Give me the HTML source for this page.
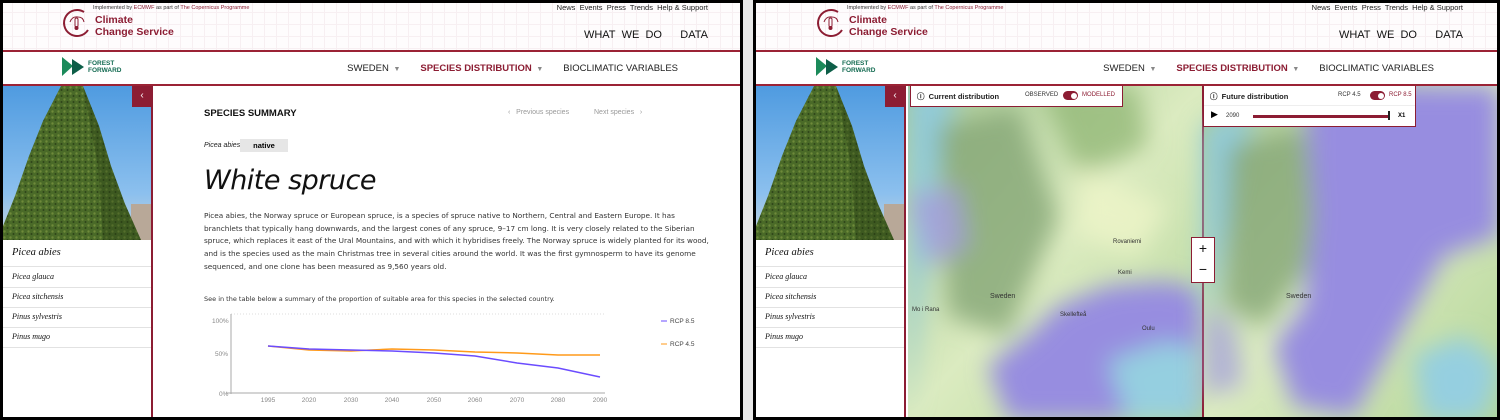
<!DOCTYPE html>
<html><head><meta charset="utf-8"><style>
*{margin:0;padding:0;box-sizing:border-box}
body{width:1500px;height:420px;background:#000;position:relative;overflow:hidden;font-family:"Liberation Sans",sans-serif}
.p{position:absolute;top:0;height:420px;overflow:hidden;background:#fff}
.a{position:absolute;white-space:nowrap}
.hdr{position:absolute;left:0;right:0;top:0;height:50px;background-color:#fefcfd;background-image:linear-gradient(#f7eff2 1px,transparent 1px),linear-gradient(90deg,#f7eff2 1px,transparent 1px);background-size:12px 12px}
.rl{position:absolute;left:0;right:0;height:2px;background:#9b2335}
.red{color:#8c1d33}
.nav{position:absolute;top:63px;font-size:9.5px;color:#222;display:flex;gap:0}
.side{position:absolute;left:3px;top:86px;width:150px;height:334px;background:#fff;border-right:2px solid #8c1d33}
.tree{position:absolute;left:0;top:0;width:148px;height:154px;background:linear-gradient(#4f9be0,#8cc0ee 70%,#c8d4dc)}
.it{position:absolute;left:0;width:148px;border-bottom:1.5px solid #e2e2e2;font-family:"Liberation Serif",serif;font-style:italic;font-size:8px;color:#111;padding-left:9px}
.btn{position:absolute;left:129px;top:0;width:20px;height:21px;background:#8c1d33;color:#fff;font-size:10px;text-align:center;line-height:20px}
.frame{position:absolute;background:#000}
</style></head><body>

<svg width="0" height="0" style="position:absolute"><defs>
<pattern id="tx" width="6" height="6" patternUnits="userSpaceOnUse"><rect width="6" height="6" fill="#4a6a28"/><circle cx="1.5" cy="1.5" r="1.2" fill="#6e8a3a"/><circle cx="4.5" cy="4" r="1" fill="#2e4418"/></pattern>
</defs></svg>

<!-- LEFT PANEL -->
<div class="p" style="left:0;width:741px">
 <div class="hdr"></div>
 <svg class="a" style="left:62px;top:8px" width="30" height="30" viewBox="0 0 30 30"><path d="M22 4 A13 13 0 1 0 26 22" fill="none" stroke="#8c1d33" stroke-width="2"/><path d="M8 14 q2-6 8-5 q5 0 6 5" fill="none" stroke="#8c1d33" stroke-width="1"/><rect x="13" y="10" width="3" height="9" rx="1.5" fill="none" stroke="#8c1d33"/><circle cx="14.5" cy="20" r="2" fill="#8c1d33"/></svg>
 <div class="a" style="left:93px;top:5px;font-size:5.5px;color:#333">Implemented by <span class="red">ECMWF</span> as part of <span class="red">The Copernicus Programme</span></div>
 <div class="a red" style="left:95px;top:14px;font-size:10.5px;font-weight:bold;line-height:12px">Climate<br>Change Service</div>
 <div class="a" style="right:33px;top:3px;font-size:7.5px;color:#222">News&nbsp; Events&nbsp; Press&nbsp; Trends&nbsp; Help &amp; Support</div>
 <div class="a" style="right:33px;top:29px;font-size:11px;color:#111">WHAT&nbsp; WE&nbsp; DO&nbsp;&nbsp;&nbsp;&nbsp;&nbsp; DATA</div>
 <div class="rl" style="top:50px"></div>
 <svg class="a" style="left:62px;top:57px" width="24" height="20"><polygon points="0,0 11,9 0,19" fill="#1b8a5a"/><polygon points="10,2 22,10 10,18" fill="#0d5e48"/></svg>
 <div class="a" style="left:88px;top:60px;font-size:6.5px;font-weight:bold;color:#146b52;line-height:7px">FOREST<br>FORWARD</div>
 <div class="nav" style="right:63px"><span>SWEDEN <span style="color:#888;font-size:7px">&nbsp;▼</span></span><span class="red" style="margin-left:20px;font-weight:bold">SPECIES DISTRIBUTION <span style="color:#888;font-size:7px">&nbsp;▼</span></span><span style="margin-left:20px">BIOCLIMATIC VARIABLES</span></div>
 <div class="rl" style="top:84px"></div>
 <div class="side">
  <div class="tree"><svg width="148" height="154"><rect x="128" y="118" width="20" height="36" fill="#b8a898"/><path d="M58 0 L80 0 L96 40 L108 80 L122 118 L138 154 L0 154 L0 140 L12 110 L26 70 L40 35 Z" fill="url(#tx)"/><path d="M80 0 L96 40 L108 80 L122 118 L138 154 L100 154 L95 80 Z" fill="#243812" opacity=".35"/></svg></div>
  <div class="btn">‹</div>
  <div class="it" style="top:156px;height:25px;font-size:10.5px;line-height:22px">Picea abies</div>
  <div class="it" style="top:182px;height:20px;line-height:18px">Picea glauca</div>
  <div class="it" style="top:202px;height:20px;line-height:18px">Picea sitchensis</div>
  <div class="it" style="top:222px;height:20px;line-height:18px">Pinus sylvestris</div>
  <div class="it" style="top:242px;height:20px;line-height:18px">Pinus mugo</div>
 </div>
 <div class="a" style="left:204px;top:108px;font-size:9.5px;font-weight:bold;color:#111">SPECIES SUMMARY</div>
 <div class="a" style="left:508px;top:109px;font-size:7px;color:#999">‹&nbsp;&nbsp; Previous species</div>
 <div class="a" style="left:594px;top:109px;font-size:7px;color:#999">Next species&nbsp;&nbsp; ›</div>
 <div class="a" style="left:204px;top:142px;font-size:7px;font-style:italic;color:#222">Picea abies</div>
 <div class="a" style="left:240px;top:139px;width:48px;height:13px;background:#e6e6e6;font-size:7.5px;font-weight:bold;text-align:center;line-height:13px">native</div>
 <div class="a" style="left:204px;top:165px;font-size:27px;font-style:italic;color:#111;font-family:'DejaVu Sans',sans-serif;letter-spacing:-0.5px">White spruce</div>
 <div class="a" style="left:204px;top:210px;width:505px;white-space:normal;font-size:7.3px;line-height:12.7px;color:#333;font-family:'DejaVu Sans',sans-serif">Picea abies, the Norway spruce or European spruce, is a species of spruce native to Northern, Central and Eastern Europe. It has branchlets that typically hang downwards, and the largest cones of any spruce, 9–17 cm long. It is very closely related to the Siberian spruce, which replaces it east of the Ural Mountains, and with which it hybridises freely. The Norway spruce is widely planted for its wood, and is the species used as the main Christmas tree in several cities around the world. It was the first gymnosperm to have its genome sequenced, and one clone has been measured as 9,560 years old.</div>
 <div class="a" style="left:204px;top:295px;font-size:6.5px;color:#333;font-family:'DejaVu Sans',sans-serif">See in the table below a summary of the proportion of suitable area for this species in the selected country.</div>
 <svg class="a" style="left:0;top:0" width="740" height="420" font-family="Liberation Sans" font-size="6.5" fill="#888">
  <line x1="231" y1="314" x2="605" y2="314" stroke="#ddd" stroke-dasharray="1,2"/>
  <line x1="231" y1="314" x2="231" y2="394" stroke="#aaa"/><line x1="226" y1="393" x2="605" y2="393" stroke="#aaa"/>
  <text x="212" y="323">100%</text><text x="215" y="356">50%</text><text x="219" y="396">0%</text>
  <g text-anchor="middle"><text x="268" y="402">1995</text><text x="309" y="402">2020</text><text x="351" y="402">2030</text><text x="392" y="402">2040</text><text x="434" y="402">2050</text><text x="475" y="402">2060</text><text x="517" y="402">2070</text><text x="558" y="402">2080</text><text x="600" y="402">2090</text></g>
  <polyline fill="none" stroke="#ff9a1a" stroke-width="1.5" points="268,346 309,350 351,351 392,349 434,350 475,352 517,353 558,355 600,355"/>
  <polyline fill="none" stroke="#6b4cff" stroke-width="1.5" points="268,346 309,349 351,350 392,351 434,353 475,356 517,363 558,368 600,377"/>
  <line x1="661" y1="321" x2="667" y2="321" stroke="#6b4cff"/><text x="670" y="323" fill="#444">RCP 8.5</text>
  <line x1="661" y1="344" x2="667" y2="344" stroke="#ff9a1a"/><text x="670" y="346" fill="#444">RCP 4.5</text>
 </svg>
</div>

<!-- RIGHT PANEL -->
<div class="p" style="left:753px;width:747px">
 <div class="hdr"></div>
 <svg class="a" style="left:63px;top:8px" width="30" height="30" viewBox="0 0 30 30"><path d="M22 4 A13 13 0 1 0 26 22" fill="none" stroke="#8c1d33" stroke-width="2"/><path d="M8 14 q2-6 8-5 q5 0 6 5" fill="none" stroke="#8c1d33" stroke-width="1"/><rect x="13" y="10" width="3" height="9" rx="1.5" fill="none" stroke="#8c1d33"/><circle cx="14.5" cy="20" r="2" fill="#8c1d33"/></svg>
 <div class="a" style="left:94px;top:5px;font-size:5.5px;color:#333">Implemented by <span class="red">ECMWF</span> as part of <span class="red">The Copernicus Programme</span></div>
 <div class="a red" style="left:96px;top:14px;font-size:10.5px;font-weight:bold;line-height:12px">Climate<br>Change Service</div>
 <div class="a" style="right:37px;top:3px;font-size:7.5px;color:#222">News&nbsp; Events&nbsp; Press&nbsp; Trends&nbsp; Help &amp; Support</div>
 <div class="a" style="right:37px;top:29px;font-size:11px;color:#111">WHAT&nbsp; WE&nbsp; DO&nbsp;&nbsp;&nbsp;&nbsp;&nbsp; DATA</div>
 <div class="rl" style="top:50px"></div>
 <svg class="a" style="left:63px;top:57px" width="24" height="20"><polygon points="0,0 11,9 0,19" fill="#1b8a5a"/><polygon points="10,2 22,10 10,18" fill="#0d5e48"/></svg>
 <div class="a" style="left:89px;top:60px;font-size:6.5px;font-weight:bold;color:#146b52;line-height:7px">FOREST<br>FORWARD</div>
 <div class="nav" style="right:66px"><span>SWEDEN <span style="color:#888;font-size:7px">&nbsp;▼</span></span><span class="red" style="margin-left:20px;font-weight:bold">SPECIES DISTRIBUTION <span style="color:#888;font-size:7px">&nbsp;▼</span></span><span style="margin-left:20px">BIOCLIMATIC VARIABLES</span></div>
 <div class="rl" style="top:84px"></div>
 <!-- maps -->
 <svg class="a" style="left:155px;top:86px" width="592" height="334">
  <defs>
   <filter id="b"><feGaussianBlur stdDeviation="12"/></filter>
   <linearGradient id="g" x1="0" y1="0" x2="1" y2="1"><stop offset="0" stop-color="#a6c894"/><stop offset=".5" stop-color="#dbebc0"/><stop offset="1" stop-color="#b3d598"/></linearGradient>
  </defs>
  <g>
   <rect width="294" height="334" fill="url(#g)"/>
   <g filter="url(#b)">
    <path d="M0 0 L50 0 L30 80 L15 200 L0 334 Z" fill="#92cbd9"/>
    <path d="M30 40 L110 20 L150 130 L100 250 L40 230 Z" fill="#86a676" opacity=".8"/>
    <path d="M130 0 L230 0 L240 60 L170 90 Z" fill="#8cb470" opacity=".7"/>
    <path d="M170 80 L260 120 L230 170 L170 150 Z" fill="#eef5c8" opacity=".8"/>
    <path d="M0 110 L50 100 L60 160 L20 180 Z" fill="#a39be0" opacity=".8"/>
    <path d="M150 220 L200 200 L260 195 L294 205 L294 334 L100 334 L80 280 L120 250 Z" fill="#978de0"/>
    <path d="M200 275 L260 255 L294 265 L290 334 L220 334 Z" fill="#95cfe0"/>
   </g>
  </g>
  <rect x="294" width="2" height="334" fill="#8c1d33"/>
  <g transform="translate(296,0)">
   <rect width="296" height="334" fill="url(#g)"/>
   <g filter="url(#b)">
    <path d="M0 40 L50 20 L25 120 L0 250 Z" fill="#92cbd9"/>
    <path d="M25 60 L100 40 L120 160 L60 240 L20 220 Z" fill="#86a676" opacity=".8"/>
    <path d="M100 0 L296 0 L296 150 L240 170 L200 240 L150 330 L90 320 L70 260 L100 220 L110 130 Z" fill="#978de0"/>
    <path d="M0 220 L30 240 L40 300 L0 310 Z" fill="#a39be0" opacity=".7"/>
    <path d="M210 270 L260 250 L296 280 L280 334 L220 334 Z" fill="#95cfe0"/>
   </g>
  </g>
  <g font-family="Liberation Sans" font-size="7" fill="#333"><text x="82" y="212">Sweden</text><text x="378" y="212">Sweden</text><text x="152" y="230" font-size="6">Skellefteå</text><text x="205" y="157" font-size="6">Rovaniemi</text><text x="210" y="188" font-size="6">Kemi</text><text x="234" y="244" font-size="6">Oulu</text><text x="4" y="225" font-size="6">Mo i Rana</text></g>
 </svg>
 <!-- sidebar -->
 <div class="side">
  <div class="tree"><svg width="148" height="154"><rect x="128" y="118" width="20" height="36" fill="#b8a898"/><path d="M58 0 L80 0 L96 40 L108 80 L122 118 L138 154 L0 154 L0 140 L12 110 L26 70 L40 35 Z" fill="url(#tx)"/><path d="M80 0 L96 40 L108 80 L122 118 L138 154 L100 154 L95 80 Z" fill="#243812" opacity=".35"/></svg></div>
  <div class="btn">‹</div>
  <div class="it" style="top:156px;height:25px;font-size:10.5px;line-height:22px">Picea abies</div>
  <div class="it" style="top:182px;height:20px;line-height:18px">Picea glauca</div>
  <div class="it" style="top:202px;height:20px;line-height:18px">Picea sitchensis</div>
  <div class="it" style="top:222px;height:20px;line-height:18px">Pinus sylvestris</div>
  <div class="it" style="top:242px;height:20px;line-height:18px">Pinus mugo</div>
 </div>
 <!-- overlays -->
 <div class="a" style="left:157px;top:86px;width:213px;height:21px;background:#fff;border:1.5px solid #8c1d33;border-top:none;font-size:7.5px">
  <span class="a" style="left:6px;top:5px;font-weight:bold;color:#222">ⓘ&nbsp; Current distribution</span>
  <span class="a" style="left:114px;top:6px;font-size:6px;color:#333">OBSERVED</span>
  <span class="a" style="left:152px;top:5px;width:15px;height:9px;border-radius:5px;background:#8c1d33"><span class="a" style="right:1.5px;top:1.5px;width:6px;height:6px;border-radius:3px;background:#fff"></span></span>
  <span class="a red" style="left:171px;top:6px;font-size:6px">MODELLED</span>
 </div>
 <div class="a" style="left:450px;top:86px;width:213px;height:41px;background:#fff;border:1.5px solid #8c1d33;border-top:none;font-size:7.5px">
  <span class="a" style="left:6px;top:5px;font-weight:bold;color:#222">ⓘ&nbsp; Future distribution</span>
  <span class="a" style="left:134px;top:6px;font-size:6px;color:#333">RCP 4.5</span>
  <span class="a" style="left:166px;top:5px;width:15px;height:9px;border-radius:5px;background:#8c1d33"><span class="a" style="right:1.5px;top:1.5px;width:6px;height:6px;border-radius:3px;background:#fff"></span></span>
  <span class="a red" style="left:185px;top:6px;font-size:6px">RCP 8.5</span>
  <div class="a" style="left:0;right:0;top:19px;height:1px;background:#eee"></div>
  <span class="a" style="left:7px;top:23px;font-size:9px">▶</span>
  <span class="a" style="left:22px;top:27px;font-size:6px;color:#333">2090</span>
  <span class="a" style="left:49px;top:29px;width:137px;height:2.5px;background:#8c1d33"></span>
  <span class="a" style="left:184px;top:25px;width:2px;height:9px;background:#222"></span>
  <span class="a" style="left:194px;top:27px;font-size:6px;font-weight:bold">X1</span>
 </div>
 <div class="a" style="left:438px;top:237px;width:24px;height:46px;background:#fff;border:1.5px solid #8c1d33;text-align:center;font-size:14px;line-height:21px;color:#111">+<br>−</div>
</div>

<!-- frames -->
<div class="frame" style="left:0;top:0;width:1500px;height:3px"></div>
<div class="frame" style="left:0;top:417px;width:1500px;height:3px"></div>
<div class="frame" style="left:0;top:0;width:3px;height:420px"></div>
<div class="frame" style="left:1497px;top:0;width:3px;height:420px"></div>
<div class="frame" style="left:740px;top:0;width:3px;height:420px"></div>
<div class="a" style="left:743px;top:0;width:10px;height:420px;background:#e8e8e8"></div>
<div class="frame" style="left:753px;top:0;width:3px;height:420px"></div>
</body></html>
